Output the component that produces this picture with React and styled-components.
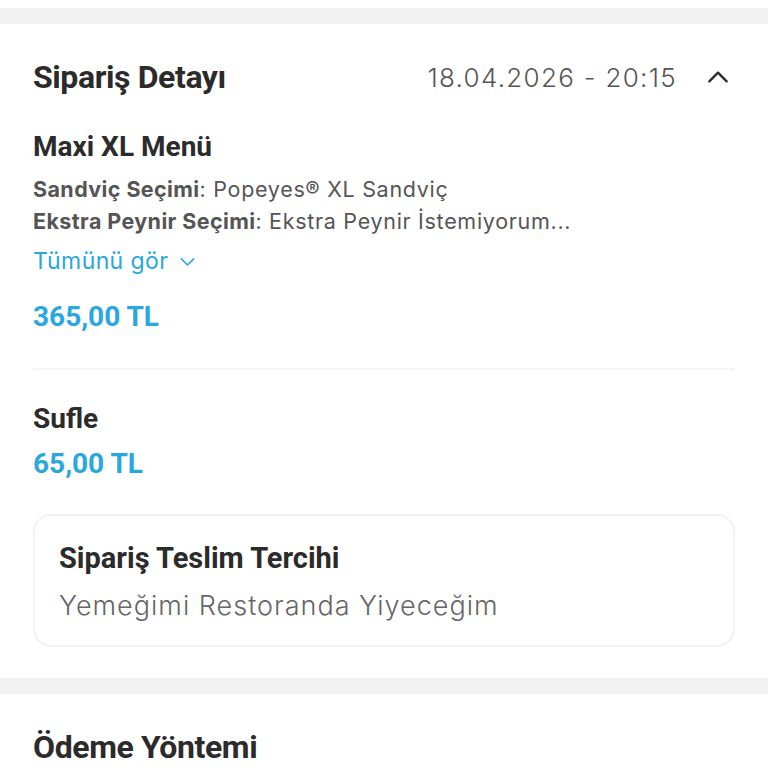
import React from 'react';
import styled, { createGlobalStyle } from 'styled-components';

const GlobalStyle = createGlobalStyle`
  html, body {
    margin: 0;
    padding: 0;
    background: #ffffff;
  }
  body {
    font-family: Roboto, "Noto Sans", sans-serif;
    color: #2b2b2b;
  }
`;

const Page = styled.div`
  display: flex;
  flex-direction: column;
  padding-top: 8px;
  background: #ffffff;
`;

const Band = styled.div`
  height: 16px;
  background: #f2f2f2;
`;

const Section = styled.section`
  display: flex;
  flex-direction: column;
  padding: 0 33px;
  background: #ffffff;
`;

const Header = styled.div`
  display: flex;
  align-items: center;
  justify-content: space-between;
  height: 106px;
`;

const Title = styled.h2`
  margin: 0;
  font-family: Roboto, sans-serif;
  font-weight: 700;
  font-size: 32px;
  letter-spacing: -0.4px;
  color: #2b2b2b;
`;

const HeaderRight = styled.div`
  display: flex;
  align-items: center;
  gap: 28px;
  padding-right: 4px;
`;

const DateText = styled.span`
  font-family: Inter, sans-serif;
  font-weight: 300;
  font-size: 26px;
  letter-spacing: 1.3px;
  color: #555555;
`;

const Item = styled.div`
  display: flex;
  flex-direction: column;
  padding: ${p => p.$pad || '0'};
  border-bottom: ${p => (p.$divider ? '2px solid #f5f5f5' : 'none')};
`;

const ItemName = styled.div`
  font-family: Roboto, sans-serif;
  font-weight: 700;
  font-size: 28px;
  line-height: 34px;
  color: #2b2b2b;
`;

const Option = styled.div`
  font-family: Inter, sans-serif;
  font-size: 21.5px;
  letter-spacing: 0.7px;
  line-height: 32px;
  color: #555555;
  white-space: nowrap;
  overflow: hidden;
  text-overflow: ellipsis;

  b {
    font-weight: 700;
    letter-spacing: 0.4px;
    color: #555555;
  }
`;

const Options = styled.div`
  margin-top: 9px;
  display: flex;
  flex-direction: column;
`;

const SeeAll = styled.button`
  display: flex;
  align-items: center;
  gap: 9px;
  margin-top: 9px;
  padding: 0;
  border: none;
  background: none;
  font-family: Inter, sans-serif;
  font-size: 23px;
  letter-spacing: 0.4px;
  line-height: 30px;
  color: #29a7df;
  align-self: flex-start;
`;

const Price = styled.div`
  margin-top: ${p => p.$mt || '0'};
  font-family: Roboto, sans-serif;
  font-weight: 700;
  font-size: 28px;
  line-height: 34px;
  color: #29a7df;
`;

const PrefBox = styled.div`
  display: flex;
  flex-direction: column;
  gap: 15px;
  margin-top: 33px;
  margin-bottom: 31px;
  padding: 26px 24px 22px;
  border: 2px solid #f2f2f2;
  border-radius: 18px;
`;

const PrefTitle = styled.div`
  font-family: Roboto, sans-serif;
  font-weight: 700;
  font-size: 29px;
  line-height: 32px;
  color: #2b2b2b;
`;

const PrefValue = styled.div`
  font-family: Inter, sans-serif;
  font-weight: 300;
  font-size: 27px;
  letter-spacing: 1px;
  line-height: 34px;
  color: #666666;
`;

const Chevron = ({ up, size = 26, color = '#2b2b2b', width = 2.2 }) => (
  <svg width={size} height={size} viewBox="0 0 24 24" fill="none" stroke={color} strokeWidth={width} strokeLinecap="round" strokeLinejoin="round">
    {up ? <polyline points="4 16 12 8 20 16" /> : <polyline points="5 9 12 16 19 9" />}
  </svg>
);

export default function App() {
  return (
    <>
      <GlobalStyle />
      <Page>
        <Band />
        <Section>
          <Header>
            <Title>Sipariş Detayı</Title>
            <HeaderRight>
              <DateText>18.04.2026 - 20:15</DateText>
              <Chevron up size={26} />
            </HeaderRight>
          </Header>
          <Item $divider $pad="0 0 34px">
            <ItemName>Maxi XL Menü</ItemName>
            <Options>
              <Option><b>Sandviç Seçimi</b>: Popeyes® XL Sandviç</Option>
              <Option><b>Ekstra Peynir Seçimi</b>: Ekstra Peynir İstemiyorum...</Option>
            </Options>
            <SeeAll>
              Tümünü gör
              <Chevron size={21} color="#29a7df" width={1.8} />
            </SeeAll>
            <Price $mt="24px">365,00 TL</Price>
          </Item>
          <Item $pad="32px 0 0">
            <ItemName>Sufle</ItemName>
            <Price $mt="11px">65,00 TL</Price>
          </Item>
          <PrefBox>
            <PrefTitle>Sipariş Teslim Tercihi</PrefTitle>
            <PrefValue>Yemeğimi Restoranda Yiyeceğim</PrefValue>
          </PrefBox>
        </Section>
        <Band />
        <Section>
          <Header>
            <Title>Ödeme Yöntemi</Title>
          </Header>
        </Section>
      </Page>
    </>
  );
}
